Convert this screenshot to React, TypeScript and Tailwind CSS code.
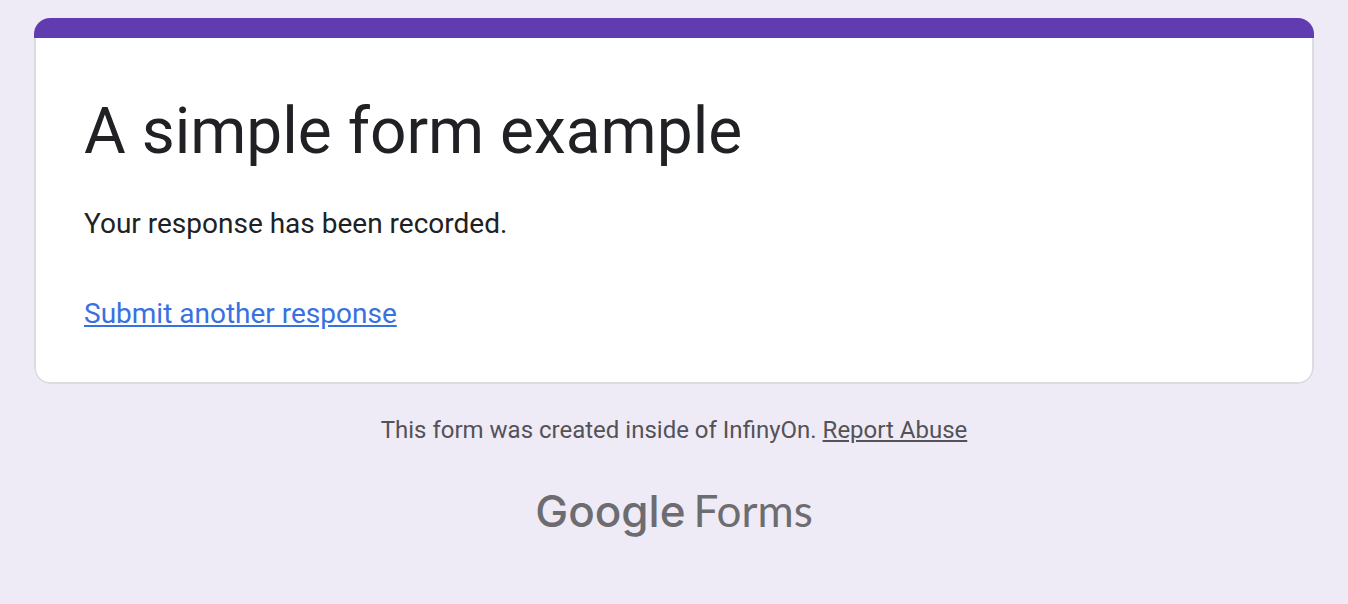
export default function App() {
  return (
    <div className="min-h-screen bg-[#eeebf6] px-[34px] pt-[18px] pb-12 font-['Roboto',sans-serif]">
      <main className="overflow-hidden rounded-2xl bg-white">
        <div className="h-5 bg-[#613cb0]" />
        <div className="rounded-b-2xl border-2 border-t-0 border-[#dadce0] px-12 pt-[54px] pb-12 text-[#202124]">
          <h1 className="text-[64px] leading-[80px]">A simple form example</h1>
          <p className="mt-8 text-[28px] leading-10">Your response has been recorded.</p>
          <a href="#" className="mt-[50px] block w-fit text-[28px] leading-10 text-[#3871e0] underline">
            Submit another response
          </a>
        </div>
      </main>
      <footer className="flex flex-col items-center text-[#545258]">
        <p className="mt-[30px] text-[24px] leading-8">
          This form was created inside of InfinyOn.{" "}
          <a href="#" className="underline">Report Abuse</a>
        </p>
        <div className="mt-[38px] flex items-baseline gap-2 text-[44px] leading-[52px] text-[#6d6c71]">
          <span className="font-['Inter',sans-serif] font-medium">Google</span>
          <span className="font-['Lato',sans-serif]">Forms</span>
        </div>
      </footer>
    </div>
  );
}
